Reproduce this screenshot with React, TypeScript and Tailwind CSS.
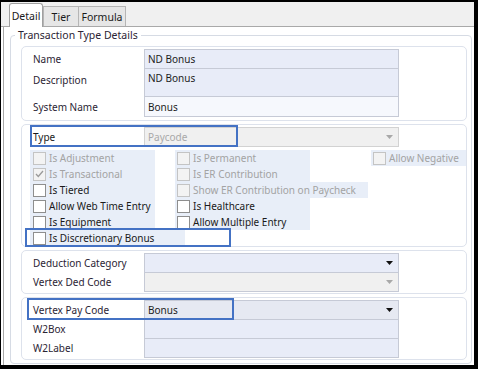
import type { ReactNode } from "react";

const font = "font-['Noto_Sans','Open_Sans',sans-serif]";

function Arrow({ dim }: { dim?: boolean }) {
  return (
    <svg width="7" height="4" viewBox="0 0 7 4" className={dim ? "fill-[#a8a8a8]" : "fill-[#111]"}>
      <path d="M0 0h7L3.5 4z" />
    </svg>
  );
}

function Field({
  label,
  value,
  h = "h-[20px]",
  bg = "bg-[#e8ecf8]",
  arrow,
  dimArrow,
  top,
  first,
}: {
  label: string;
  value?: string;
  h?: string;
  bg?: string;
  arrow?: boolean;
  dimArrow?: boolean;
  top?: boolean;
  first?: boolean;
}) {
  return (
    <div className={`flex ${h} ${first ? "" : "-mt-[1px]"}`}>
      <div className={`w-[111px] shrink-0 text-[#2b2434] ${top ? "pt-[5px]" : "flex items-center"}`}>{label}</div>
      <div
        className={`flex w-[255px] border border-[#c6cad6] ${bg} pl-[3px] pr-[5px] ${
          top ? "items-start pt-[2px]" : "items-center"
        } justify-between text-[#1d1d1d]`}
      >
        <span>{value}</span>
        {arrow && <Arrow dim={dimArrow} />}
      </div>
    </div>
  );
}

function Panel({ children, className = "" }: { children: ReactNode; className?: string }) {
  return (
    <div className={`relative rounded-[5px] border border-[#dde2ec] bg-white ${className}`}>{children}</div>
  );
}

function Check({
  label,
  w,
  dim,
  checked,
  pl = "pl-[3px]",
  bg = "bg-[#e8eef8]",
}: {
  label: string;
  w: string;
  dim?: boolean;
  checked?: boolean;
  pl?: string;
  bg?: string;
}) {
  return (
    <div className={`flex h-[16px] items-center gap-[3px] ${w} ${pl} ${bg} ${dim ? "text-[#a3a3a3]" : "text-[#1a1a1a]"}`}>
      <span
        className={`flex h-[13px] w-[13px] shrink-0 items-center justify-center border ${
          dim ? "border-[#c4c4c4] bg-[#f3f3f3]" : "border-[#8e8e8e] bg-white"
        }`}
      >
        {checked && (
          <svg width="9" height="8" viewBox="0 0 9 8" fill="none" stroke="#9a9a9a" strokeWidth="1.3">
            <path d="M1 4l2.3 2.5L8 1" />
          </svg>
        )}
      </span>
      <span className="whitespace-nowrap">{label}</span>
    </div>
  );
}

export default function App() {
  return (
    <div className={`h-[369px] w-[478px] bg-black pb-[4px] pl-[1px] pr-[4px] pt-[2px] text-[10px] leading-[14px] ${font}`}>
      <div className="flex h-full flex-col bg-white">
        {/* tab strip */}
        <div className="flex h-[25px] shrink-0 items-end border-b border-[#a9a9a9] bg-[#f0f0f0] pl-[8px] text-[10.5px]">
          <div className="relative -mb-[1px] flex h-[24px] w-[34px] items-center justify-center rounded-t-[3px] border border-b-0 border-[#a0a0a0] bg-white text-[#1a1a1a]">
            Detail
          </div>
          <div className="flex h-[20px] w-[36px] items-center justify-center border border-b-0 border-[#b5b5b5] bg-[#e6e6e6] text-[#1a1a1a]">
            Tier
          </div>
          <div className="flex h-[20px] w-[47px] items-center justify-center border border-b-0 border-l-0 border-[#b5b5b5] bg-[#e6e6e6] text-[#1a1a1a]">
            Formula
          </div>
        </div>

        <div className="ml-[2px] flex-1 border-l border-[#a9a9a9] pl-[6px] pr-[2px] pt-[1px]">
          <fieldset className="rounded-[4px] border border-[#d6dbe4] pb-[3px]">
            <legend className="ml-[4px] px-[3px] text-[10.5px] text-[#2b2434]">Transaction Type Details</legend>

            <div className="pl-[10px] pr-[4px]">
              <Panel className="mt-[4px] pb-[3px] pl-[11px] pt-[2px]">
                <Field first label="Name" value="ND Bonus" />
                <Field label="Description" value="ND Bonus" h="h-[29px]" top />
                <Field label="System Name" value="Bonus" h="h-[21px]" bg="bg-[#f6f8fd]" />
              </Panel>

              <Panel className="mt-[3px] pl-[8px] pt-[2px]">
                <div className="pl-[3px]">
                  <div className="flex h-[20px]">
                    <div className="flex w-[111px] shrink-0 items-center text-[#1a1a1a]">Type</div>
                    <div className="flex w-[255px] items-center justify-between border border-[#d2d2d2] bg-[#f0f0f0] pl-[3px] pr-[5px] text-[#a8a8a8]">
                      <span>Paycode</span>
                      <Arrow dim />
                    </div>
                  </div>
                </div>
                <div className="mt-[3px] grid grid-cols-[145px_196px_1fr]">
                  <div>
                    <Check label="Is Adjustment" w="w-[125px]" dim />
                    <Check label="Is Transactional" w="w-[125px]" dim checked />
                    <Check label="Is Tiered" w="w-[125px]" />
                    <Check label="Allow Web Time Entry" w="w-[125px]" />
                    <Check label="Is Equipment" w="w-[125px]" />
                    <Check label="Is Discretionary Bonus" w="w-[155px]" />
                  </div>
                  <div>
                    <Check label="Is Permanent" w="w-[135px]" dim pl="pl-[2px]" />
                    <Check label="Is ER Contribution" w="w-[135px]" dim pl="pl-[2px]" />
                    <Check label="Show ER Contribution on Paycheck" w="w-[193px]" dim pl="pl-[2px]" />
                    <Check label="Is Healthcare" w="w-[135px]" pl="pl-[2px]" />
                    <Check label="Allow Multiple Entry" w="w-[135px]" pl="pl-[2px]" />
                  </div>
                  <div>
                    <Check label="Allow Negative" w="w-full" dim pl="pl-[2px]" />
                  </div>
                </div>
                {/* annotation boxes */}
                <div className="pointer-events-none absolute left-[8px] top-[0px] h-[22px] w-[208px] border-2 border-[#4472c4]" />
                <div className="pointer-events-none absolute left-[3px] top-[103px] h-[19px] w-[206px] border-2 border-[#4472c4]" />
              </Panel>

              <Panel className="mt-[3px] pb-[1px] pl-[11px] pt-[2px]">
                <Field first label="Deduction Category" arrow />
                <Field label="Vertex Ded Code" bg="bg-[#f0f0f0]" arrow dimArrow />
              </Panel>

              <Panel className="mt-[3px] pb-[1px] pl-[11px] pt-[2px]">
                <Field first label="Vertex Pay Code" value="Bonus" bg="bg-[#e6e9f2]" arrow />
                <Field label="W2Box" />
                <Field label="W2Label" />
                <div className="pointer-events-none absolute left-[5px] top-[0px] h-[22px] w-[207px] border-2 border-[#4472c4]" />
              </Panel>
            </div>
          </fieldset>
        </div>
      </div>
    </div>
  );
}
